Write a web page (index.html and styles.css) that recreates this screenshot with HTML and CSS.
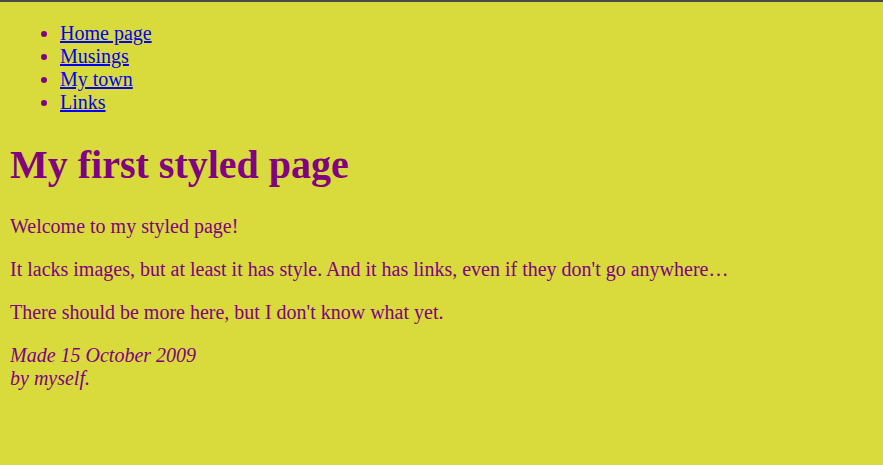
FILE: index.html
```html
<!DOCTYPE html>
<html lang="en">
<head>
<meta charset="utf-8">
<title>My first styled page</title>
<link rel="stylesheet" href="styles.css">
</head>
<body>
<ul class="navbar">
  <li><a href="#">Home page</a></li>
  <li><a href="#">Musings</a></li>
  <li><a href="#">My town</a></li>
  <li><a href="#">Links</a></li>
</ul>
<h1 class="title">My first styled page</h1>
<p class="para">Welcome to my styled page!</p>
<p class="para">It lacks images, but at least it has style. And it has links, even if they don't go anywhere…</p>
<p class="para">There should be more here, but I don't know what yet.</p>
<address class="sig">Made 15 October 2009<br>by myself.</address>
</body>
</html>
```
FILE: styles.css
```css
html {
  border-top: 2px solid #4a4a4a;
  background: #d9da3b;
}
body {
  margin: 0 10px 10px;
  font-family: "Liberation Serif", "Times New Roman", serif;
  font-size: 20px;
  color: #800080;
  background: #d9da3b;
}
.navbar {
  margin: 20px 0;
  padding-left: 50px;
}
.navbar a {
  color: #0000ee;
}
.title {
  font-size: 40px;
  font-weight: bold;
  margin: 26.8px 0;
}
.para {
  margin: 20px 0;
}
.sig {
  font-style: italic;
}
```
